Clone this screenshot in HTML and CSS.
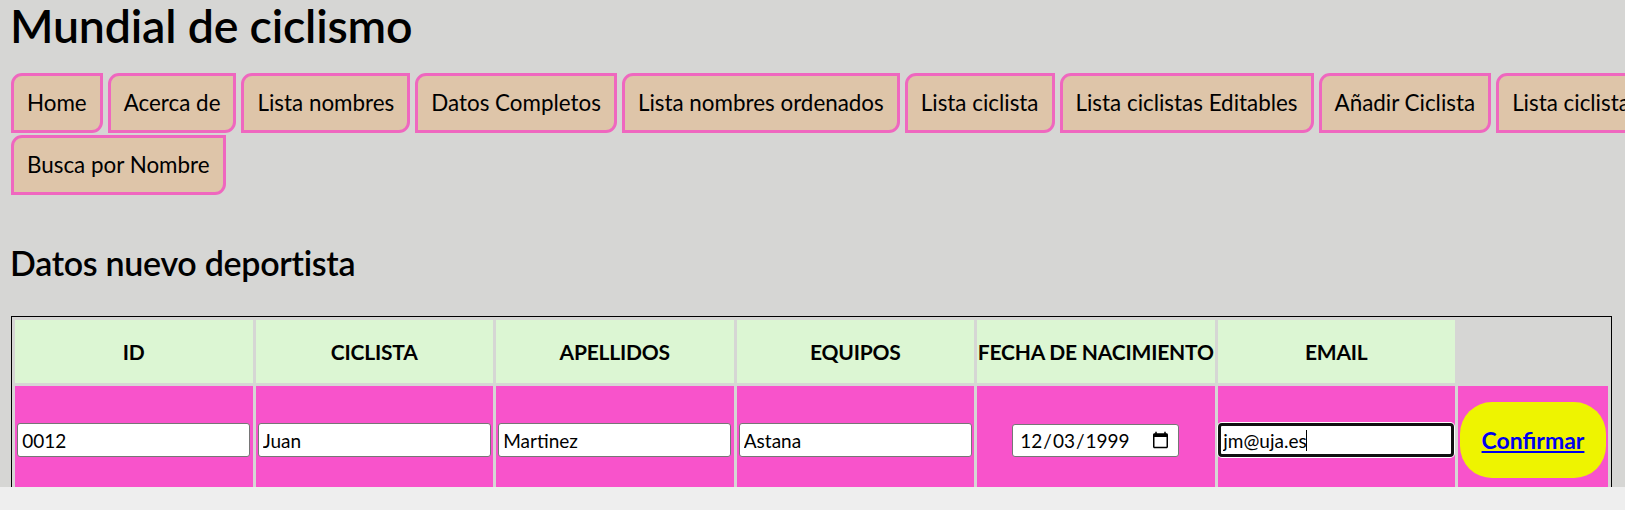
FILE: index.html
```html
<!DOCTYPE html>
<html lang="es">
<head>
<meta charset="utf-8">
<title>Mundial de ciclismo</title>
<link rel="stylesheet" href="styles.css">
</head>
<body>
<div class="screen">
  <div class="viewport">
    <main class="page">
      <h1 class="title">Mundial de ciclismo</h1>
      <nav class="menu">
        <a class="menu-btn" href="#">Home</a>
        <a class="menu-btn" href="#">Acerca de</a>
        <a class="menu-btn" href="#">Lista nombres</a>
        <a class="menu-btn" href="#">Datos Completos</a>
        <a class="menu-btn" href="#">Lista nombres ordenados</a>
        <a class="menu-btn" href="#">Lista ciclista</a>
        <a class="menu-btn" href="#">Lista ciclistas Editables</a>
        <a class="menu-btn" href="#">Añadir Ciclista</a>
        <a class="menu-btn" href="#">Lista ciclistas por Equipo</a>
        <a class="menu-btn" href="#">Busca por Nombre</a>
      </nav>
      <h2 class="section-title">Datos nuevo deportista</h2>
      <table class="form-table">
        <colgroup>
          <col class="col-data"><col class="col-data"><col class="col-data">
          <col class="col-data"><col class="col-data"><col class="col-data">
          <col class="col-action">
        </colgroup>
        <thead>
          <tr>
            <th class="head-cell">ID</th>
            <th class="head-cell">CICLISTA</th>
            <th class="head-cell">APELLIDOS</th>
            <th class="head-cell">EQUIPOS</th>
            <th class="head-cell">FECHA DE NACIMIENTO</th>
            <th class="head-cell">EMAIL</th>
            <th class="head-empty"></th>
          </tr>
        </thead>
        <tbody>
          <tr>
            <td class="body-cell"><input class="field" type="text" value="0012"></td>
            <td class="body-cell"><input class="field" type="text" value="Juan"></td>
            <td class="body-cell"><input class="field" type="text" value="Martinez"></td>
            <td class="body-cell"><input class="field" type="text" value="Astana"></td>
            <td class="body-cell"><input class="field field-date" type="date" value="1999-12-03"></td>
            <td class="body-cell"><span class="focus-wrap"><input class="field field-focus" type="email" value="jm@uja.es"><span class="caret"></span></span></td>
            <td class="body-cell"><span class="confirm"><a class="confirm-link" href="#">Confirmar</a></span></td>
          </tr>
        </tbody>
      </table>
    </main>
  </div>
  <div class="hscroll"></div>
</div>
</body>
</html>
```

FILE: styles.css
```css
html, body {
  margin: 0;
  padding: 0;
}
body {
  background: #eeeeee;
  font-family: "Lato", "Liberation Sans", sans-serif;
  color: #000;
}
.screen {
  width: 1625px;
  height: 510px;
  overflow: hidden;
  display: flex;
  flex-direction: column;
}
.viewport {
  height: 487px;
  flex: none;
  overflow: hidden;
  background: #d6d6d4;
}
.hscroll {
  flex: 1;
  background: #eeeeee;
}
.page {
  padding-left: 8px;
}
.title {
  margin: 0;
  padding-left: 2px;
  font-size: 46.5px;
  line-height: 50px;
  font-weight: 600;
  letter-spacing: -0.2px;
}
.menu {
  margin: 23px 0 0 3px;
  width: 1800px;
  display: flex;
  flex-wrap: wrap;
  column-gap: 5px;
  row-gap: 2px;
}
.menu-btn {
  display: block;
  box-sizing: border-box;
  height: 60px;
  padding: 12px 13px;
  line-height: 30px;
  font-size: 22.4px;
  color: #000;
  text-decoration: none;
  background: #dec5a9;
  border: 3px solid #ef67bf;
  border-radius: 11px 0 11px 0;
}
.section-title {
  margin: 48px 0 0 2px;
  font-size: 34px;
  line-height: 40px;
  font-weight: 600;
  letter-spacing: -0.3px;
}
.form-table {
  margin: 33px 0 0 3px;
  border: 1px solid #000;
  border-spacing: 3px;
  table-layout: fixed;
  width: 1601px;
}
.col-data {
  width: 237.5px;
}
.col-action {
  width: 150px;
}
.head-cell {
  height: 63px;
  padding: 0;
  background: #dcf6d3;
  font-size: 21px;
  font-weight: 700;
  letter-spacing: -0.2px;
  text-align: center;
  vertical-align: middle;
  white-space: nowrap;
  overflow: hidden;
}
.head-empty {
  padding: 0;
  background: transparent;
}
.body-cell {
  height: 108px;
  padding: 0;
  background: #f853cb;
  text-align: center;
  vertical-align: middle;
}
.field {
  box-sizing: border-box;
  width: 233px;
  height: 34px;
  margin: 0;
  padding: 3px 4px;
  font-family: "Lato", "Liberation Sans", sans-serif;
  font-size: 19px;
  color: #000;
  background: #fff;
  border: 1px solid #767676;
  border-radius: 3px;
  text-align: left;
  vertical-align: middle;
}
.field-date {
  width: 167px;
  height: 33px;
  padding: 2px 6px;
}
.focus-wrap {
  position: relative;
  display: inline-block;
  vertical-align: middle;
}
.field-focus {
  display: block;
  width: 236px;
  border: 3px solid #101010;
  border-radius: 4px;
  box-shadow: 0 0 0 1px #fff;
  outline: none;
  padding: 1px 2px;
}
.caret {
  position: absolute;
  left: 88px;
  top: 7px;
  width: 1px;
  height: 21px;
  background: #000;
}
.field:focus {
  outline: none;
}
.confirm {
  display: flex;
  align-items: center;
  justify-content: center;
  box-sizing: border-box;
  width: 146px;
  height: 76px;
  margin: 0 auto;
  background: #eef400;
  border-radius: 32px;
}
.confirm-link {
  font-size: 23px;
  font-weight: 700;
  color: #0000ee;
  text-decoration: underline;
}
```
